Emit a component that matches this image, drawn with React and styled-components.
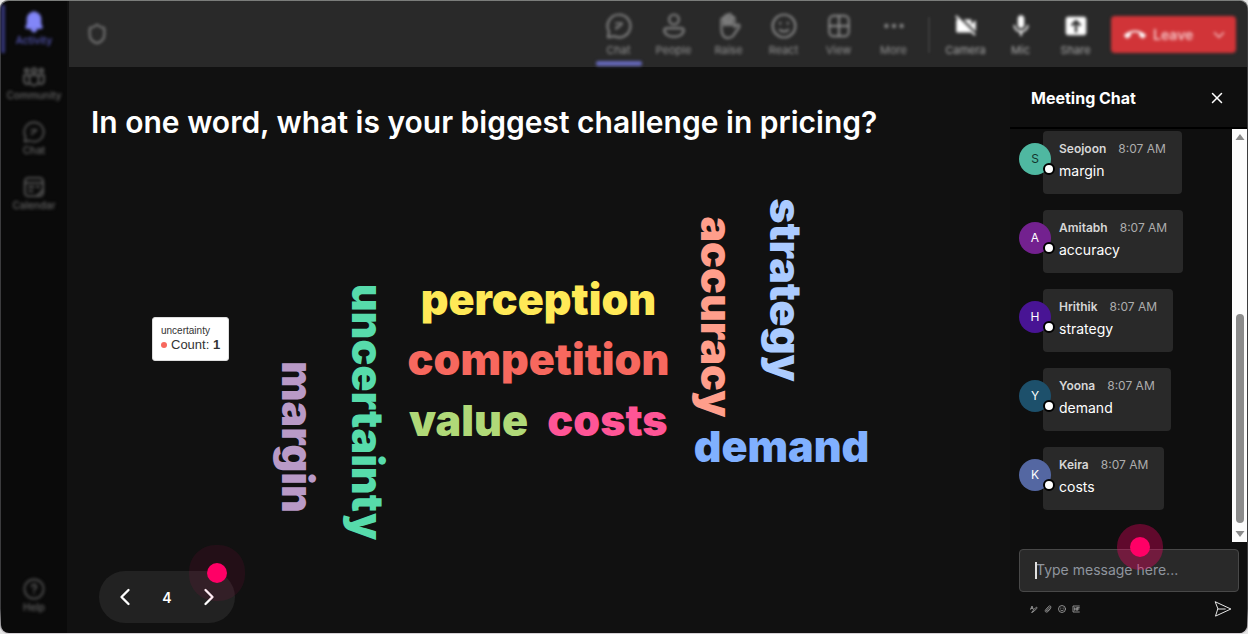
import React from "react";
import styled, { createGlobalStyle } from "styled-components";
import { ChevronDown, ChevronLeft, ChevronRight, Ellipsis, Shield, X } from "lucide-react";
import { MdMic, MdVideocamOff, MdCallEnd } from "react-icons/md";

const GlobalStyle = createGlobalStyle`
  *, *::before, *::after { box-sizing: border-box; }
  body { margin: 0; background: #e6e6e6; font-family: Inter, "Liberation Sans", sans-serif; color: #fff; }
  button { font: inherit; color: inherit; background: none; border: 0; padding: 0; cursor: pointer; }
  h1, h2, p, ul { margin: 0; padding: 0; }
  ul { list-style: none; }
`;

const Window = styled.div`
  display: flex;
  min-height: 100vh;
  padding: 1px;
  background: linear-gradient(#7d7f7d, #3c3c3e 12px, #3c3c3e 96%, #d8d4d8);
  border-radius: 8px;
  overflow: hidden;
`;

const Rail = styled.nav`
  flex: 0 0 66px;
  display: flex;
  flex-direction: column;
  padding: 4px 0 6px;
  background: #0a0a0a;
  border-radius: 8px 0 0 8px;
`;

const RailItem = styled.button`
  position: relative;
  display: flex;
  flex-direction: column;
  align-items: center;
  gap: 1px;
  height: 55px;
  padding-top: 6px;
  font-size: 10px;
  line-height: 12px;
  font-weight: 500;
  color: ${(p) => (p.$active ? "#5658b8" : "#666")};
  margin-top: ${(p) => (p.$last ? "auto" : "0")};
  filter: blur(1px) blur(1px);
  svg { width: 22px; height: 22px; color: ${(p) => (p.$active ? "#8286f8" : "#585858")}; }
  &::before {
    content: "";
    display: ${(p) => (p.$active ? "block" : "none")};
    position: absolute;
    left: 0;
    top: 0;
    width: 4px;
    height: 48px;
    background: #343678;
  }
`;

const Content = styled.div`
  flex: 1;
  min-width: 0;
  display: flex;
  flex-direction: column;
  background: #111;
  border-radius: 0 8px 8px 0;
  overflow: hidden;
`;

const Toolbar = styled.header`
  display: flex;
  align-items: flex-start;
  height: 66px;
  padding: 0 11px 0 17px;
  margin-left: 2px;
  background: #292929;
`;

const ShieldMark = styled.span`
  margin: 22px auto 0 0;
  color: #808080;
  filter: blur(1px) blur(1px);
`;

const Tool = styled.button`
  display: flex;
  flex-direction: column;
  align-items: center;
  gap: 4px;
  width: 55px;
  height: 66px;
  padding-top: 12px;
  font-size: 11px;
  line-height: 14px;
  color: ${(p) => (p.$bright ? "#aaa" : "#949494")};
  filter: blur(1px) blur(1px);
  svg { width: 26px; height: 26px; color: ${(p) => (p.$bright ? "#fff" : "#8c8c8c")}; }
  &::after {
    content: "";
    width: 46px;
    height: 5px;
    border-radius: 2px;
    background: ${(p) => (p.$active ? "#6467b8" : "transparent")};
  }
`;

const Divider = styled.span`
  width: 2px;
  height: 36px;
  margin: 16px 8px 0 7px;
  background: #3b3b3b;
  filter: blur(1px);
`;

const LeaveGroup = styled.div`
  display: flex;
  align-items: center;
  width: 125px;
  height: 37px;
  margin: 15px 0 0 8px;
  background: #d13438;
  border-radius: 4px;
  color: #f6c4c5;
  filter: blur(1px) blur(1px);
`;

const LeaveButton = styled.button`
  display: flex;
  align-items: center;
  gap: 7px;
  padding-left: 13px;
  margin-right: auto;
  font-size: 14px;
  font-weight: 600;
  line-height: 20px;
  svg { color: #fff; }
`;

const LeaveMenu = styled.button`
  display: flex;
  padding-right: 8px;
`;

const Body = styled.div`
  flex: 1;
  display: flex;
`;

const Stage = styled.main`
  flex: 1;
  min-width: 0;
  display: flex;
  flex-direction: column;
  padding: 37px 24px 10px;
`;

const Question = styled.h1`
  font-size: 30px;
  line-height: 36px;
  font-weight: 600;
`;

const Cloud = styled.div`
  position: relative;
  flex: 1;
`;

const Word = styled.span`
  position: absolute;
  left: calc(50% + ${(p) => p.$x}px);
  top: calc(50% + ${(p) => p.$y}px);
  transform: translate(-50%, -50%);
  writing-mode: ${(p) => (p.$vertical ? "vertical-rl" : "horizontal-tb")};
  font-size: 43px;
  line-height: 48px;
  font-weight: 900;
  white-space: nowrap;
  color: ${(p) => p.$color};
`;

const Tooltip = styled.div`
  position: absolute;
  left: 61px;
  top: calc(50% - 39px);
  padding: 7px 8px;
  border: 1px solid #ddd;
  border-radius: 3px;
  background: #fff;
  color: #333;
  font: 13px/16px "Liberation Sans", Arial, sans-serif;
`;

const TooltipTitle = styled.p`
  font-size: 10px;
  line-height: 12px;
`;

const TooltipRow = styled.p`
  display: flex;
  align-items: center;
  gap: 4px;
  white-space: pre;
  &::before {
    content: "";
    width: 6px;
    height: 6px;
    border-radius: 50%;
    background: #f7685e;
  }
`;

const Pager = styled.div`
  position: relative;
  display: flex;
  align-items: center;
  justify-content: space-between;
  align-self: flex-start;
  width: 136px;
  height: 52px;
  margin-left: 8px;
  padding: 0 12px;
  border-radius: 26px;
  background: #222;
  font-size: 14px;
  font-weight: 600;
  button { display: flex; }
`;

const Pulse = styled.span`
  position: absolute;
  left: ${(p) => p.$left};
  top: ${(p) => p.$top};
  width: 20px;
  height: 20px;
  border-radius: 50%;
  background: #ff0066;
  box-shadow: 0 0 0 ${(p) => p.$spread}px ${(p) => p.$halo};
  pointer-events: none;
`;

const Panel = styled.aside`
  flex: 0 0 238px;
  display: flex;
  flex-direction: column;
  margin-right: -1px;
  background: #0f0f0f;
`;

const PanelHead = styled.div`
  display: flex;
  align-items: center;
  justify-content: space-between;
  height: 62px;
  padding: 2px 22px 0 21px;
  border-bottom: 2px solid #000;
  button { display: flex; }
`;

const PanelTitle = styled.h2`
  font-size: 16px;
  line-height: 20px;
  font-weight: 700;
`;

const Feed = styled.div`
  flex: 1;
  display: flex;
  justify-content: space-between;
`;

const Messages = styled.ul`
  display: flex;
  flex-direction: column;
  gap: 16px;
  padding: 2px 0 0 9px;
`;

const Message = styled.li`
  display: flex;
  align-items: flex-start;
`;

const Avatar = styled.span`
  position: relative;
  z-index: 1;
  display: grid;
  place-items: center;
  width: 32px;
  height: 32px;
  margin: 12px -8px 0 0;
  border-radius: 50%;
  background: ${(p) => p.$bg};
  color: ${(p) => p.$fg};
  font-size: 12px;
  line-height: 16px;
  &::after {
    content: "";
    position: absolute;
    right: -4px;
    bottom: 0;
    width: 12px;
    height: 12px;
    border: 2px solid #000;
    border-radius: 50%;
    background: #fff;
  }
`;

const Bubble = styled.div`
  height: 63px;
  padding: 8px 16px;
  border-radius: 4px;
  background: #292929;
  font-size: 14px;
  line-height: 24px;
`;

const Byline = styled.p`
  display: flex;
  gap: 12px;
  font-size: 12px;
  line-height: 20px;
  font-weight: 600;
  color: #d6d6d6;
  time { font-weight: 400; color: #adadad; }
`;

const Scrollbar = styled.div`
  display: flex;
  flex-direction: column;
  align-items: center;
  width: 15px;
  margin-right: 1px;
  padding: 5px 0;
  background: #fcfcfc;
`;

const Thumb = styled.span`
  width: 8px;
  height: 209px;
  margin: auto 0 8px;
  border-radius: 4px;
  background: #8b8b8b;
`;

const Composer = styled.form`
  padding: 7px 9px 13px;
`;

const Field = styled.div`
  position: relative;
  &::before {
    content: "";
    position: absolute;
    left: 16px;
    top: 13px;
    width: 2px;
    height: 17px;
    background: #e0e0e0;
  }
`;

const MessageInput = styled.input`
  display: block;
  width: 100%;
  height: 43px;
  padding: 0 16px 2px;
  border: 1px solid #484848;
  border-radius: 4px;
  outline: 0;
  background: #292929;
  color: #fff;
  font: 14px/20px Inter, "Liberation Sans", sans-serif;
  &::placeholder { color: #8f959e; opacity: 1; }
`;

const Actions = styled.div`
  display: flex;
  align-items: center;
  gap: 6px;
  height: 22px;
  margin-top: 6px;
  padding: 0 7px 0 11px;
  color: #a8a8a8;
  button { display: flex; }
  button:last-child { margin-left: auto; color: #fff; }
`;

const Icon = ({ size = 24, width = 1.8, children, fill = "none" }) => (
  <svg width={size} height={size} viewBox="0 0 24 24" fill={fill} stroke="currentColor" strokeWidth={width} strokeLinecap="round" strokeLinejoin="round" aria-hidden="true">
    {children}
  </svg>
);

const BellIcon = () => (
  <Icon fill="currentColor" width={1}>
    <path d="M12 1a7.500 7.500 0 0 0-7.500 7.500V14L3 17.400c-.3.700.2 1.600 1 1.600h16c.8 0 1.300-.9 1-1.600L19.500 14V8.500A7.500 7.500 0 0 0 12 1Z" />
    <path d="M9 20h6a3 3 0 0 1-6 0Z" />
  </Icon>
);

const CommunityIcon = () => (
  <Icon width={2.2}>
    <circle cx="4" cy="5" r="2" /><circle cx="12" cy="5" r="2.5" /><circle cx="20" cy="5" r="2" />
    <path d="M7 10h10v6a5 5 0 0 1-10 0ZM7 10H1v5a4 4 0 0 0 6 4M17 10h6v5a4 4 0 0 1-6 4" />
  </Icon>
);

const ChatIcon = () => (
  <Icon>
    <path d="M12 1.500a10.500 10.500 0 1 1-4.600 19.900L1.800 22.500l1-5.300A10.500 10.500 0 0 1 12 1.500Z" />
    <path d="M9 9.500h6l-3 3.500H9.500v2" strokeWidth="1.500" />
  </Icon>
);

const CalendarIcon = () => (
  <Icon width={2}>
    <rect x="2" y="2" width="20" height="20" rx="4" />
    <path d="M2 7.500h20M6.500 12h5M15 12h2.500M6.500 16.500h4M22 15l-7 7" />
  </Icon>
);

const PeopleIcon = () => (
  <Icon><circle cx="12" cy="6" r="4.500" /><path d="M5 14h14a2 2 0 0 1 2 2c0 3.500-4 6-9 6s-9-2.500-9-6a2 2 0 0 1 2-2Z" /></Icon>
);

const RaiseIcon = () => (
  <Icon>
    <path d="M5 14V6a1.500 1.500 0 0 1 3 0V3.500a1.500 1.500 0 0 1 3 0V2.500a1.500 1.500 0 0 1 3 0V5a1.500 1.500 0 0 1 3 0v8l2.500-2c1-1 3 0 2 2l-5 7c-1 2-3 3-5.500 3-4 0-6-3-6-9Z" />
    <path d="M8 5.500V11M11 3.500V11M14 5V11" strokeWidth="2.5" />
  </Icon>
);

const SmileIcon = ({ size, width }) => (
  <Icon size={size} width={width}><circle cx="12" cy="12" r="10.500" /><path d="M8 15.500c2 2 6 2 8 0M8.500 9v1M15.500 9v1" /></Icon>
);

const ViewIcon = () => (
  <Icon><rect x="3" y="2.500" width="18" height="19" rx="4" /><path d="M12 3v18M3 12h18" /></Icon>
);

const ShareIcon = () => (
  <Icon fill="currentColor" width={1}>
    <rect x="3" y="4" width="18" height="16" rx="2" />
    <path d="M12 17V8M8.500 11 12 7.500l3.500 3.500" stroke="#292929" strokeWidth="2.2" fill="none" />
  </Icon>
);

const HelpIcon = () => (
  <Icon><circle cx="12" cy="12" r="10.500" /><path d="M9.500 9.500a2.500 2.500 0 1 1 3.500 2.300c-.7.400-1 1-1 1.700M12 16.500v.3" /></Icon>
);

const SendIcon = () => (
  <Icon size={18} width={1.2}><path d="M2 2.500 22.500 12 2 21.500 5 12ZM5 12h10" /></Icon>
);

const FormatIcon = () => (
  <Icon size={8} width={2.4}><path d="M2 13 6 3l4 10M3 10h5M7 21c1-4 9-13 12-14s3 3 0 5L9 21l-4 1" /></Icon>
);

const ClipIcon = () => (
  <Icon size={8} width={2.4}><path d="m19 12-8 8c-5 4-10-1-6-6l9-10c4-4 9 1 6 5L11 18c-3 2-5-1-3-3l8-8" /></Icon>
);

const LoopIcon = () => (
  <Icon size={8} width={2.4}><path d="M22 3H3v18h19M8 8v8M8 12h5M13 8v8M17 8h5M17 8v8M17 12h4" /></Icon>
);

const words = [
  { text: "perception", x: 0, y: -57, color: "#ffe957" },
  { text: "competition", x: 0, y: 3, color: "#f7685e" },
  { text: "value", x: -70, y: 64, color: "#b0d978" },
  { text: "costs", x: 69, y: 64, color: "#ff5596" },
  { text: "demand", x: 243, y: 90, color: "#80b0ff" },
  { text: "margin", x: -241, y: 81, color: "#b99ac7", vertical: true },
  { text: "uncertainty", x: -171, y: 56, color: "#57dbab", vertical: true },
  { text: "accuracy", x: 178, y: -39, color: "#ff9e8b", vertical: true },
  { text: "strategy", x: 247, y: -66, color: "#abcbff", vertical: true },
];

const messages = [
  { name: "Seojoon", text: "margin", bg: "#4fb8a1", fg: "#12352d" },
  { name: "Amitabh", text: "accuracy", bg: "#73218f", fg: "#fff" },
  { name: "Hrithik", text: "strategy", bg: "#481494", fg: "#fff" },
  { name: "Yoona", text: "demand", bg: "#1d506b", fg: "#fff" },
  { name: "Keira", text: "costs", bg: "#5467a2", fg: "#fff" },
];

export default function App() {
  return (
    <>
      <GlobalStyle />
      <Window>
        <Rail>
          <RailItem $active><BellIcon />Activity</RailItem>
          <RailItem><CommunityIcon />Community</RailItem>
          <RailItem><ChatIcon />Chat</RailItem>
          <RailItem><CalendarIcon />Calendar</RailItem>
          <RailItem $last><HelpIcon />Help</RailItem>
        </Rail>
        <Content>
          <Toolbar>
            <ShieldMark><Shield size={22} /></ShieldMark>
            <Tool $active><ChatIcon />Chat</Tool>
            <Tool><PeopleIcon />People</Tool>
            <Tool><RaiseIcon />Raise</Tool>
            <Tool><SmileIcon />React</Tool>
            <Tool><ViewIcon />View</Tool>
            <Tool><Ellipsis />More</Tool>
            <Divider />
            <Tool $bright><MdVideocamOff />Camera</Tool>
            <Tool $bright><MdMic />Mic</Tool>
            <Tool $bright><ShareIcon />Share</Tool>
            <LeaveGroup>
              <LeaveButton><MdCallEnd size={22} />Leave</LeaveButton>
              <LeaveMenu aria-label="Leave options"><ChevronDown size={18} /></LeaveMenu>
            </LeaveGroup>
          </Toolbar>
          <Body>
            <Stage>
              <Question>In one word, what is your biggest challenge in pricing?</Question>
              <Cloud>
                {words.map((w) => (
                  <Word key={w.text} $x={w.x} $y={w.y} $color={w.color} $vertical={w.vertical}>{w.text}</Word>
                ))}
                <Tooltip>
                  <TooltipTitle>uncertainty</TooltipTitle>
                  <TooltipRow><span>Count: <b>1</b></span></TooltipRow>
                </Tooltip>
              </Cloud>
              <Pager>
                <button aria-label="Previous"><ChevronLeft size={28} /></button>
                <span>4</span>
                <button aria-label="Next"><ChevronRight size={28} /></button>
                <Pulse $left="108px" $top="-8px" $spread={18} $halo="rgba(255, 0, 102, 0.08)" />
              </Pager>
            </Stage>
            <Panel>
              <PanelHead>
                <PanelTitle>Meeting Chat</PanelTitle>
                <button aria-label="Close"><X size={18} strokeWidth={2} /></button>
              </PanelHead>
              <Feed>
                <Messages>
                  {messages.map((m) => (
                    <Message key={m.name}>
                      <Avatar $bg={m.bg} $fg={m.fg}>{m.name[0]}</Avatar>
                      <Bubble>
                        <Byline>{m.name}<time>8:07 AM</time></Byline>
                        <p>{m.text}</p>
                      </Bubble>
                    </Message>
                  ))}
                </Messages>
                <Scrollbar>
                  <svg width="10" height="6" aria-hidden="true"><path d="M5 0 9.500 6H.5Z" fill="#8b8b8b" /></svg>
                  <Thumb />
                  <svg width="10" height="6" aria-hidden="true"><path d="M5 6 9.500 0H.5Z" fill="#8b8b8b" /></svg>
                </Scrollbar>
              </Feed>
              <Composer onSubmit={(e) => e.preventDefault()}>
                <Field>
                  <MessageInput aria-label="Message" placeholder="Type message here..." />
                  <Pulse $left="111px" $top="-12px" $spread={13} $halo="rgba(255, 0, 102, 0.34)" />
                </Field>
                <Actions>
                  <button type="button" aria-label="Format"><FormatIcon /></button>
                  <button type="button" aria-label="Attach"><ClipIcon /></button>
                  <button type="button" aria-label="Emoji"><SmileIcon size={8} width={2.4} /></button>
                  <button type="button" aria-label="Loop"><LoopIcon /></button>
                  <button aria-label="Send"><SendIcon /></button>
                </Actions>
              </Composer>
            </Panel>
          </Body>
        </Content>
      </Window>
    </>
  );
}
